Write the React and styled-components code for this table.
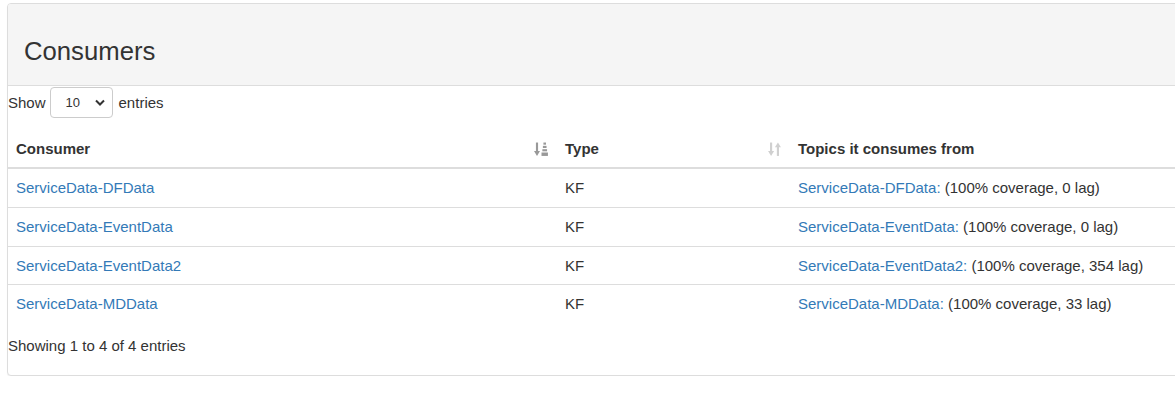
import React from 'react';
import styled, { createGlobalStyle } from 'styled-components';

const GlobalStyle = createGlobalStyle`
    html, body {
        margin: 0;
        overflow: hidden;
        background: #fff;
    }
    body {
        font-family: "Liberation Sans", Arial, sans-serif;
        font-size: 15px;
        color: #333;
    }
`

/* PANEL */
const Page = styled.div`
    padding: 3px 0 0 7px;
`
const Panel = styled.section`
    width: 1200px;
    background: #fff;
    border: 1px solid #ddd;
    border-radius: 4px;
    box-shadow: 0 1px 1px rgba(0, 0, 0, 0.05);
`
const Heading = styled.div`
    background: #f5f5f5;
    border-bottom: 1px solid #ddd;
    border-radius: 3px 3px 0 0;
    padding: 33px 16px 20px;
`
const Title = styled.h3`
    margin: 0;
    font-size: 25.7px;
    font-weight: 500;
    line-height: 1.1;
    color: #333;
`

/* LENGTH SELECT */
const LengthRow = styled.label`
    display: flex;
    align-items: center;
    margin-top: 1px;
    line-height: 20px;
`
const SelectWrap = styled.span`
    position: relative;
    display: inline-flex;
    margin: 0 6px 0 4px;
`
const Select = styled.select`
    appearance: none;
    width: 63px;
    height: 31px;
    padding: 0 0 0 15px;
    border: 1px solid #ccc;
    border-radius: 4px;
    background: #fff;
    font-family: inherit;
    font-size: 13px;
    color: #333;
`
const Chevron = styled.svg`
    position: absolute;
    right: 8px;
    top: 12px;
    pointer-events: none;
`

/* TABLE */
const Table = styled.table`
    width: 100%;
    table-layout: fixed;
    border-collapse: collapse;
    margin-top: 13px;
`
const Th = styled.th`
    width: ${p => p.$w || 'auto'};
    text-align: left;
    padding: 8px;
    line-height: 20px;
    font-weight: bold;
    border-bottom: 2px solid #ddd;
`
const ThInner = styled.div`
    display: flex;
    justify-content: space-between;
    align-items: center;
`
const Row = styled.tr`
    & + & td {
        border-top: 1px solid #ddd;
    }
`
const Td = styled.td`
    padding: 8px;
    line-height: 21.67px;
    vertical-align: top;
    white-space: nowrap;
`
const Link = styled.a`
    color: #337ab7;
    text-decoration: none;
`
const Info = styled.div`
    padding: 13px 0 19px;
    line-height: 20px;
`

function SortAsc() {
    return (
        <svg width="15" height="15" viewBox="0 0 14 14">
            <rect x="1.8" y="0.5" width="2" height="9" fill="#999" />
            <polygon points="0,8.5 5.6,8.5 2.8,13" fill="#999" />
            <rect x="8.8" y="0.5" width="2.4" height="2" fill="#999" />
            <rect x="8.3" y="3.6" width="3.4" height="2" fill="#999" />
            <rect x="7.8" y="6.7" width="4.4" height="2" fill="#999" />
            <rect x="7" y="9.8" width="6" height="3.2" fill="#999" />
        </svg>
    )
}

function SortBoth() {
    return (
        <svg width="15" height="15" viewBox="0 0 14 14">
            <rect x="2.8" y="0.5" width="2" height="9" fill="#d0d0d0" />
            <polygon points="1,8.5 6.6,8.5 3.8,13" fill="#d0d0d0" />
            <rect x="9.2" y="4" width="2" height="9" fill="#d0d0d0" />
            <polygon points="7.4,5 13,5 10.2,0.5" fill="#d0d0d0" />
        </svg>
    )
}

const consumers = [
    { name: 'ServiceData-DFData', type: 'KF', topic: 'ServiceData-DFData', lag: 0 },
    { name: 'ServiceData-EventData', type: 'KF', topic: 'ServiceData-EventData', lag: 0 },
    { name: 'ServiceData-EventData2', type: 'KF', topic: 'ServiceData-EventData2', lag: 354 },
    { name: 'ServiceData-MDData', type: 'KF', topic: 'ServiceData-MDData', lag: 33 },
]

export default function App() {
    return (
        <>
            <GlobalStyle />
            <Page>
                <Panel>
                    <Heading>
                        <Title>Consumers</Title>
                    </Heading>
                    <LengthRow>
                        Show
                        <SelectWrap>
                            <Select defaultValue="10">
                                <option value="10">10</option>
                                <option value="25">25</option>
                                <option value="50">50</option>
                                <option value="100">100</option>
                            </Select>
                            <Chevron width="10" height="8" viewBox="0 0 10 8">
                                <polyline points="1,1.5 5,5.5 9,1.5" fill="none" stroke="#333" strokeWidth="2" />
                            </Chevron>
                        </SelectWrap>
                        entries
                    </LengthRow>
                    <Table>
                        <thead>
                            <tr>
                                <Th $w="533px">
                                    <ThInner>Consumer <SortAsc /></ThInner>
                                </Th>
                                <Th $w="217px">
                                    <ThInner>Type <SortBoth /></ThInner>
                                </Th>
                                <Th>Topics it consumes from</Th>
                            </tr>
                        </thead>
                        <tbody>
                            {consumers.map(c => (
                                <Row key={c.name}>
                                    <Td><Link href="#">{c.name}</Link></Td>
                                    <Td>{c.type}</Td>
                                    <Td>
                                        <Link href="#">{c.topic}:</Link> (100% coverage, {c.lag} lag)
                                    </Td>
                                </Row>
                            ))}
                        </tbody>
                    </Table>
                    <Info>Showing 1 to 4 of 4 entries</Info>
                </Panel>
            </Page>
        </>
    );
}
